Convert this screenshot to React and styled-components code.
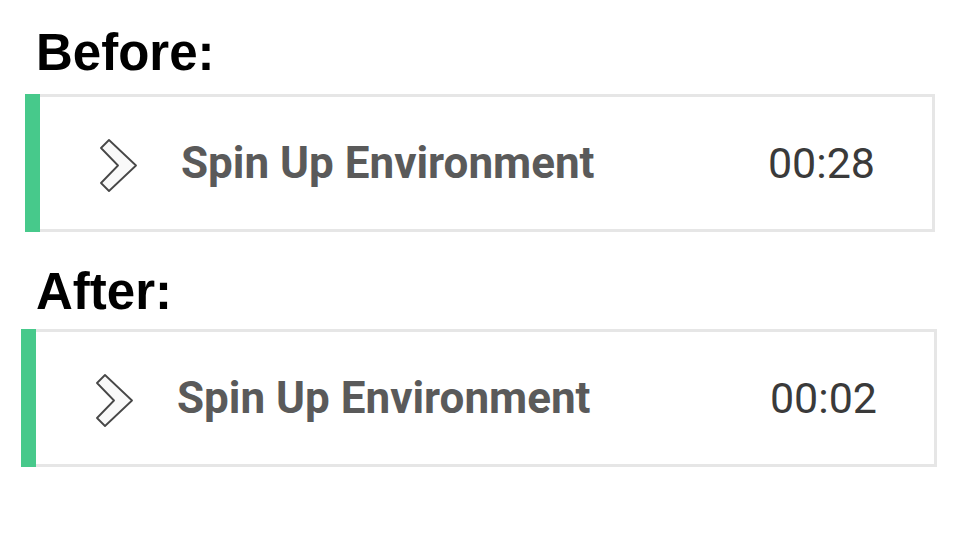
import React from "react";
import styled, { createGlobalStyle } from "styled-components";

const Global = createGlobalStyle`
  html, body { margin: 0; padding: 0; background: #ffffff; }
  body { width: 960px; height: 540px; overflow: hidden; font-family: Roboto, "Liberation Sans", sans-serif; }
`;

const Page = styled.div`
  display: flex;
  flex-direction: column;
  width: 960px;
`;

const Section = styled.section`
  display: flex;
  flex-direction: column;
  margin-top: ${(p) => p.$top}px;
`;

const Heading = styled.h2`
  margin: 0 0 0 36px;
  font-family: "Liberation Sans", Arial, sans-serif;
  font-weight: 700;
  font-size: 51px;
  line-height: 51px;
  color: #000;
`;

const Card = styled.div`
  display: flex;
  height: 138px;
  margin: ${(p) => p.$gap}px ${(p) => p.$right}px 0 ${(p) => p.$left}px;
`;

const Stripe = styled.div`
  width: 15px;
  flex: none;
  background: #47c98b;
`;

const Body = styled.div`
  flex: 1;
  display: flex;
  align-items: center;
  border: 3px solid #e6e6e6;
  border-left: none;
  padding: 0 57px 0 59px;
`;

const Icon = styled.svg`
  width: 38px;
  height: 54px;
  flex: none;
  margin-top: 4px;
`;

const Title = styled.span`
  margin-left: 44px;
  font-family: Roboto, "Liberation Sans", sans-serif;
  font-weight: 700;
  font-size: 44px;
  color: #5a5a5a;
`;

const Time = styled.span`
  margin-left: auto;
  font-family: Roboto, "Liberation Sans", sans-serif;
  font-weight: 400;
  font-size: 43px;
  color: #3a3a3a;
`;

const Chevron = () => (
  <Icon viewBox="0 0 38 54">
    <polygon
      points="10,2 37,27.5 10,53 2,45 19,27.5 2,10"
      fill="#f9f9f9"
      stroke="#474747"
      strokeWidth="1.8"
      strokeLinejoin="round"
    />
  </Icon>
);

const Row = ({ time, gap, left, right }) => (
  <Card $gap={gap} $left={left} $right={right}>
    <Stripe />
    <Body>
      <Chevron />
      <Title>Spin Up Environment</Title>
      <Time>{time}</Time>
    </Body>
  </Card>
);

export default function App() {
  return (
    <>
      <Global />
      <Page>
        <Section $top={27}>
          <Heading>Before:</Heading>
          <Row time="00:28" gap={16} left={25} right={25} />
        </Section>
        <Section $top={34}>
          <Heading>After:</Heading>
          <Row time="00:02" gap={12} left={21} right={23} />
        </Section>
      </Page>
    </>
  );
}
